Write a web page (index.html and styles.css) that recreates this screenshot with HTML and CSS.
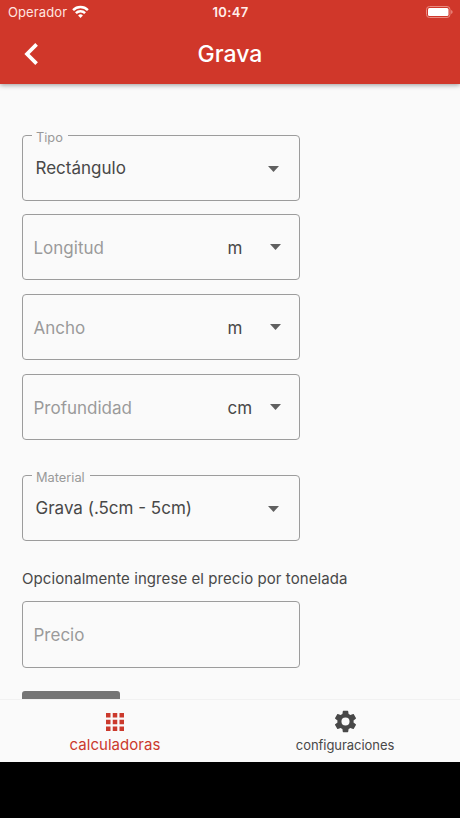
FILE: index.html
```html
<!DOCTYPE html>
<html lang="es">
<head>
<meta charset="utf-8">
<title>Grava</title>
<link rel="stylesheet" href="styles.css">
</head>
<body>
<div class="app">
  <header class="header">
    <div class="status">
      <div class="carrier"><span class="carrier-name">Operador</span>
        <svg class="wifi" viewBox="0 0 17 13" width="17" height="13" fill="none" stroke="#fff" stroke-width="2.5"><path d="M1.1 5.1a10.5 10.5 0 0 1 14.8 0M3.9 8.200a6.500 6.500 0 0 1 9.2 0"/><path d="M8.5 13 6.1 10.400a3.5 3.5 0 0 1 4.8 0z" fill="#fff" stroke="none"/></svg>
      </div>
      <span class="time">10:47</span>
      <svg class="battery" viewBox="0 0 27 12" width="27" height="12"><rect x=".5" y=".5" width="23.5" height="11" rx="3" fill="none" stroke="#ea8a80"/><rect x="2" y="2" width="20.5" height="8" rx="1.5" fill="#fff"/><path d="M25.3 4v4q1.2-.5 1.2-2t-1.2-2" fill="#ee9e95"/></svg>
    </div>
    <div class="toolbar">
      <svg class="back" viewBox="0 0 14 22" width="14" height="22" fill="none" stroke="#fff" stroke-width="3.7"><path d="M12.6 1.400 3 11l9.600 9.600"/></svg>
      <h1 class="title">Grava</h1>
    </div>
  </header>
  <main class="content">
    <div class="field select">
      <span class="label">Tipo</span>
      <span class="value">Rectángulo</span><i class="arrow"></i>
    </div>
    <div class="field"><span class="hint">Longitud</span><span class="unit">m</span><i class="arrow"></i></div>
    <div class="field"><span class="hint">Ancho</span><span class="unit">m</span><i class="arrow"></i></div>
    <div class="field"><span class="hint">Profundidad</span><span class="unit">cm</span><i class="arrow"></i></div>
    <div class="field select material">
      <span class="label">Material</span>
      <span class="value">Grava (.5cm - 5cm)</span><i class="arrow"></i>
    </div>
    <p class="note">Opcionalmente ingrese el precio por tonelada</p>
    <div class="field price"><span class="hint">Precio</span></div>
    <div class="button"></div>
  </main>
  <nav class="tabs">
    <div class="tab active">
      <svg viewBox="4 4 16 16" width="18" height="18" fill="currentColor"><path d="M4 8h4V4H4zm6 12h4v-4h-4zm-6 0h4v-4H4zm0-6h4v-4H4zm6 0h4v-4h-4zm6-10v4h4V4zm-6 4h4V4h-4zm6 6h4v-4h-4zm0 6h4v-4h-4z"/></svg>
      <span class="tab-name">calculadoras</span>
    </div>
    <div class="tab">
      <svg viewBox="0 0 24 24" width="27" height="27" fill="currentColor"><path d="M19.14 12.94c.04-.3.06-.61.06-.94 0-.32-.02-.64-.07-.94l2.03-1.58c.18-.14.23-.41.12-.61l-1.92-3.32c-.12-.22-.37-.29-.59-.22l-2.39.96c-.5-.38-1.03-.7-1.62-.94l-.36-2.54c-.04-.24-.24-.41-.48-.41h-3.84c-.24 0-.43.17-.47.41l-.36 2.54c-.59.24-1.13.57-1.62.94l-2.39-.96c-.22-.08-.47 0-.59.22L2.74 8.87c-.12.21-.08.47.12.61l2.03 1.58c-.05.3-.09.63-.09.94s.02.64.07.94l-2.03 1.58c-.18.14-.23.41-.12.61l1.92 3.32c.12.22.37.29.59.22l2.39-.96c.5.38 1.03.7 1.62.94l.36 2.54c.05.24.24.41.48.41h3.84c.24 0 .44-.17.47-.41l.36-2.54c.59-.24 1.13-.56 1.62-.94l2.39.96c.22.08.47 0 .59-.22l1.92-3.32c.12-.22.07-.47-.12-.61zM12 15.6A3.6 3.6 0 1 1 12 8.400a3.6 3.6 0 0 1 0 7.2z"/></svg>
      <span class="tab-name">configuraciones</span>
    </div>
  </nav>
</div>
</body>
</html>
```
FILE: styles.css
```css
* { box-sizing: border-box; }
body { margin: 0; background: #000; font-family: Inter, "Liberation Sans", sans-serif; color: #484848; }
.app { display: flex; flex-direction: column; width: 460px; height: 762px; background: #fafafa; overflow: hidden; }
.header { flex: none; height: 84px; background: #d0372a; color: #fff; box-shadow: 0 1px 5px rgba(0, 0, 0, .4); z-index: 1; }
.status { display: grid; grid-template-columns: 1fr auto 1fr; align-items: center; height: 24px; padding: 0 7px 0 8px; font-size: 13px; line-height: 24px; }
.carrier { display: flex; align-items: center; gap: 5px; }
.carrier-name { letter-spacing: .1px; color: #ffe5e0; }
.wifi { margin-top: -2px; }
.time { font-weight: 600; letter-spacing: .3px; color: #ffeeea; }
.battery { justify-self: end; }
.toolbar { display: grid; grid-template-columns: 24px 1fr 24px; align-items: center; height: 60px; padding: 0 24px; }
.title { margin: 0; text-align: center; font-size: 23px; line-height: 60px; font-weight: 500; }
.content { flex: 1; min-height: 0; overflow: hidden; padding: 51px 0 0 22px; }
.field { position: relative; display: flex; align-items: center; width: 278px; height: 66px; margin-bottom: 14px; padding: 0 18px 0 10.5px; border: 1px solid #9c9c9c; border-radius: 4px; font-size: 17px; line-height: 24px; }
.select { margin-bottom: 13px; padding: 0 20px 0 12.5px; }
.select .value { padding-bottom: 1px; }
.select .arrow { margin-top: 2px; }
.material { margin-top: 35px; }
.label { position: absolute; top: -6px; left: 9px; padding: 0 5px 0 4px; background: #fafafa; color: #999; font-size: 12.8px; line-height: 16px; }
.value, .hint { flex: 1; white-space: nowrap; }
.hint { color: #9a9a9a; }
.field:not(.select) .hint, .unit { padding-top: 1px; }
.unit { width: 42.5px; }
.arrow { width: 11px; height: 6px; background: #606060; clip-path: polygon(0 0, 100% 0, 50% 100%); }
.note { margin: 26px 0 10px; font-size: 15px; line-height: 24px; letter-spacing: .07px; white-space: nowrap; }
.price { height: 67px; margin-bottom: 23px; }
.button { width: 98px; height: 40px; border-radius: 3px 3px 0 0; background: #757575; }
.tabs { flex: none; display: flex; height: 63px; border-top: 1px solid #f1f1f1; }
.tab { flex: 1; display: grid; grid-template-rows: 44px 16px; justify-items: center; align-items: center; align-content: start; font-size: 13px; line-height: 16px; }
.tab svg { margin-top: -1px; }
.tab-name { margin-top: -14px; letter-spacing: -.05px; }
.tab.active { color: #cb392c; }
.tab.active .tab-name { font-size: 15px; letter-spacing: .03px; }
```
